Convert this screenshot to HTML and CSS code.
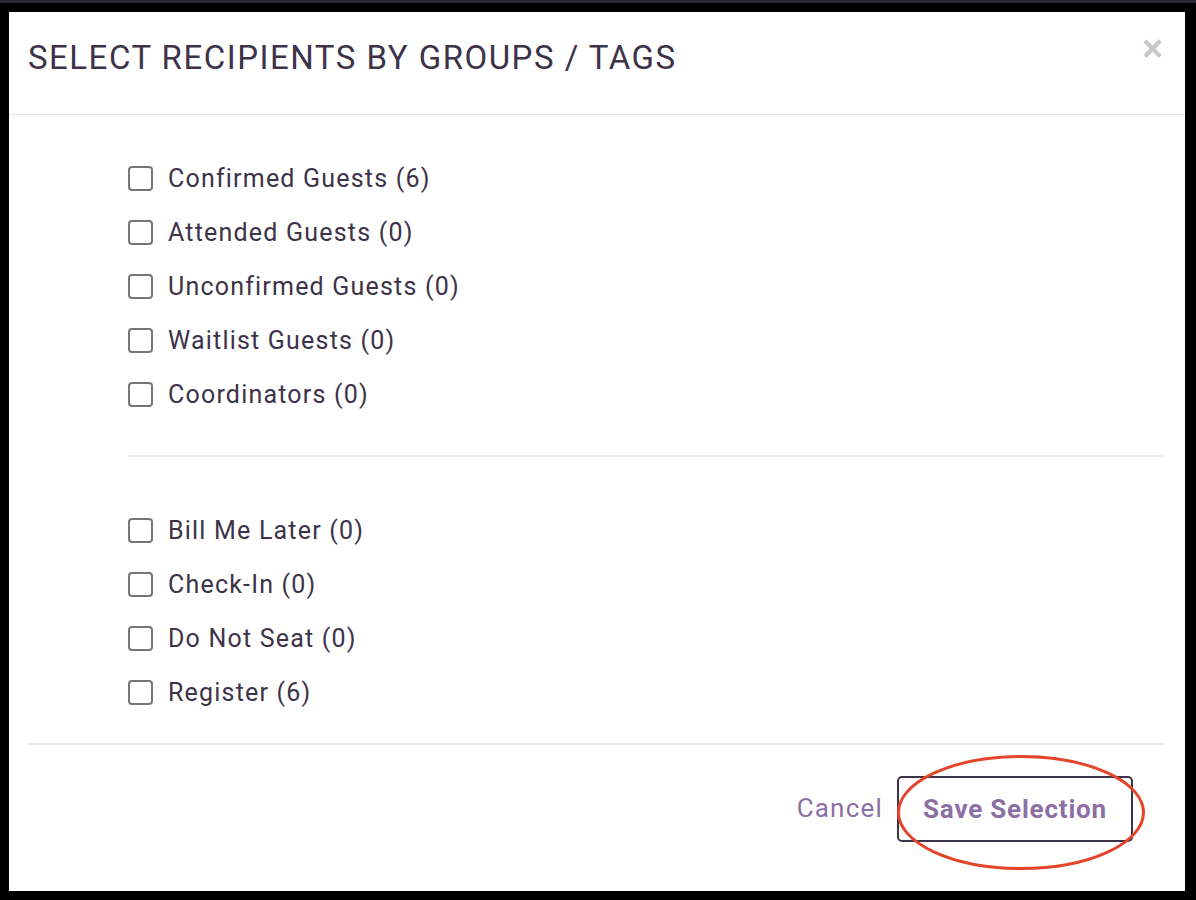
FILE: index.html
```html
<!DOCTYPE html>
<html>
<head>
	<meta charset="UTF-8">
	<title>Select Recipients</title>
	<link rel="stylesheet" href="styles.css">
</head>
<body>
	<div class="topstrip"></div>
	<div class="modal">
		<div class="modal-header">
			<h2 class="modal-title">SELECT RECIPIENTS BY GROUPS / TAGS</h2>
			<span class="close">&times;</span>
		</div>

		<div class="modal-body">
			<div class="group first">
				<label class="row"><span class="box"></span>Confirmed Guests (6)</label>
				<label class="row"><span class="box"></span>Attended Guests (0)</label>
				<label class="row"><span class="box"></span>Unconfirmed Guests (0)</label>
				<label class="row"><span class="box"></span>Waitlist Guests (0)</label>
				<label class="row"><span class="box"></span>Coordinators (0)</label>
			</div>
			<hr class="divider">
			<div class="group second">
				<label class="row"><span class="box"></span>Bill Me Later (0)</label>
				<label class="row"><span class="box"></span>Check-In (0)</label>
				<label class="row"><span class="box"></span>Do Not Seat (0)</label>
				<label class="row"><span class="box"></span>Register (6)</label>
			</div>
		</div>

		<div class="modal-footer">
			<a class="cancel">Cancel</a>
			<div class="save-wrap">
				<button class="save">Save Selection</button>
				<svg class="circle" width="252" height="119" viewBox="0 0 252 119">
					<ellipse cx="126" cy="59.5" rx="122.5" ry="56" fill="none" stroke="#e5432a" stroke-width="3"/>
				</svg>
			</div>
		</div>
	</div>
</body>
</html>
```

FILE: styles.css
```css
html, body { margin: 0; padding: 0; }
body {
	background: #000;
	width: 1196px;
	height: 900px;
	overflow: hidden;
	font-family: Roboto, "Liberation Sans", sans-serif;
	color: #3d3349;
}
.topstrip { height: 3px; background: #2b2730; }
.modal {
	background: #fff;
	margin: 9px 11px 0 9px;
	height: 879px;
	display: flex;
	flex-direction: column;
}
.modal-header {
	height: 102px;
	border-bottom: 1px solid #e5e5e5;
	display: flex;
	align-items: center;
	justify-content: space-between;
	padding: 0 20px 0 19px;
}
.modal-title {
	margin: 0;
	font-weight: 400;
	font-size: 33px;
	letter-spacing: 1.5px;
	color: #3d3349;
	margin-top: -12px;
}
.close {
	color: #c8c8c8;
	font-size: 36px;
	font-weight: 700;
	line-height: 1;
	margin-top: -28px;
	margin-right: 2px;
	font-family: "Liberation Sans", sans-serif;
}
.modal-body {
	padding: 36px 21px 0 119px;
}
.group { display: flex; flex-direction: column; }
.row {
	height: 54px;
	display: flex;
	align-items: center;
	font-size: 25px;
	letter-spacing: 1.2px;
	color: #3d3349;
}
.box {
	width: 21px;
	height: 21px;
	border: 2px solid #767676;
	border-radius: 4px;
	margin-right: 15px;
	flex: none;
}
.divider {
	border: 0;
	border-top: 2px solid #ececec;
	margin: 34px 0 46px 0;
}
.modal-footer {
	margin: 24px 21px 0 19px;
	border-top: 2px solid #e8e8e8;
	display: flex;
	justify-content: flex-end;
	align-items: center;
	padding: 31px 31px 0 0;
}
.cancel {
	color: #8c70a3;
	font-size: 26px;
	letter-spacing: 1.2px;
	margin-right: 14px;
	margin-top: -3px;
}
.save-wrap { position: relative; }
.save {
	width: 236px;
	height: 66px;
	border: 2px solid #3d3349;
	border-radius: 5px;
	background: #fff;
	color: #8c70a3;
	font-family: Roboto, "Liberation Sans", sans-serif;
	font-weight: 700;
	font-size: 26px;
	letter-spacing: 0.8px;
	padding: 0;
}
.circle {
	position: absolute;
	left: -2px;
	top: -23px;
	pointer-events: none;
}
```
